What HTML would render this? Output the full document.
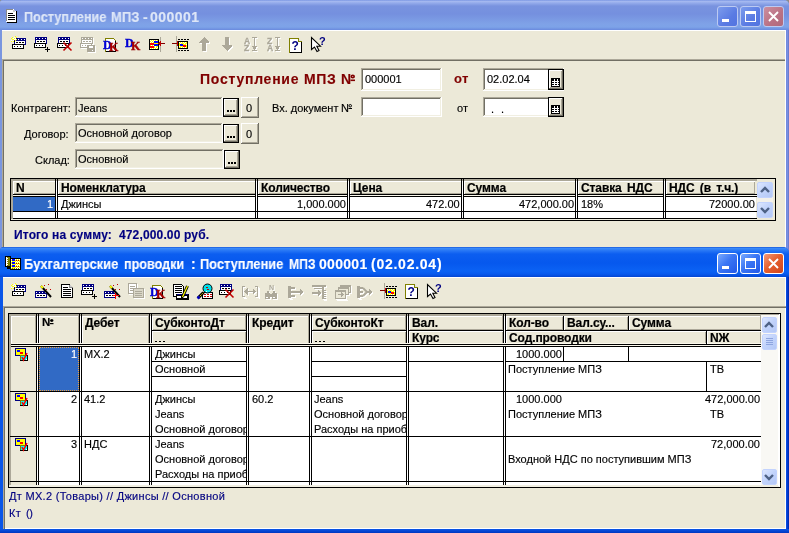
<!DOCTYPE html>
<html><head><meta charset="utf-8">
<style>
*{margin:0;padding:0;box-sizing:border-box}
html,body{width:789px;height:533px;overflow:hidden;background:#8C8C8C}
body{position:relative;font-family:"Liberation Sans",sans-serif;font-size:11px;color:#000}
.a{position:absolute}
.t{position:absolute;white-space:pre;will-change:transform;-webkit-text-stroke:0.15px currentColor}
svg{position:absolute;overflow:visible}
</style></head><body>
<div class="a" style="left:0;top:0;width:789px;height:260px;background:#7A96DF;border-radius:3px 5px 0 0;overflow:hidden">
<div class="a" style="left:0;top:0;width:789px;height:30px;background:linear-gradient(#6A89DE 0px,#A9BCF1 1px,#94ABEB 3px,#7993DF 6px,#7590DF 14px,#7FA2E7 24px,#7DA3E8 27px,#6A8ADE 30px)"></div>
</div>
<div class="t" style="left:24px;top:10.15px;font-size:14px;line-height:14px;font-weight:bold;color:#DDE6F7;transform:scaleX(0.905);transform-origin:0 0;">Поступление</div>
<div class="t" style="left:111px;top:10.15px;font-size:14px;line-height:14px;font-weight:bold;color:#DDE6F7;transform:scaleX(0.93);transform-origin:0 0;">МПЗ</div>
<div class="t" style="left:142.5px;top:10.15px;font-size:14px;line-height:14px;font-weight:bold;color:#DDE6F7;transform:scaleX(1);transform-origin:0 0;">-</div>
<div class="t" style="left:149.5px;top:10.15px;font-size:14px;line-height:14px;font-weight:bold;color:#DDE6F7;transform:scaleX(1.0);transform-origin:0 0;letter-spacing:0.45px">000001</div>
<svg style="left:6px;top:9px" width="12" height="14" viewBox="0 0 12 14" shape-rendering="crispEdges"><rect x="1" y="2" width="10" height="12" fill="#000"/><path d="M0 0H7L10 3V13H0Z" fill="#fff"/><rect x="0" y="0" width="7" height="1" fill="#8A8A8A"/><rect x="0" y="0" width="1" height="12" fill="#8A8A8A"/><rect x="7" y="1" width="2" height="2" fill="#C8C8C8"/><rect x="2" y="4" width="5" height="1" fill="#000"/><rect x="2" y="6" width="7" height="1" fill="#000"/><rect x="2" y="8" width="7" height="1" fill="#000"/><rect x="2" y="10" width="7" height="1" fill="#000"/></svg>
<div class="a" style="left:717px;top:6px;width:21px;height:21px;border:1px solid #BCCAF2;border-radius:3px;background:linear-gradient(135deg,#7C9CEC 0%,#5A7BE3 60%,#5274E0 100%)">
<div class="a" style="left:4px;top:12px;width:7px;height:3px;background:#fff"></div>
</div>
<div class="a" style="left:740px;top:6px;width:21px;height:21px;border:1px solid #BCCAF2;border-radius:3px;background:linear-gradient(135deg,#7C9CEC 0%,#5A7BE3 60%,#5274E0 100%)">
<div class="a" style="left:4px;top:4px;width:11px;height:11px;border:1px solid #fff;border-top-width:3px"></div>
</div>
<div class="a" style="left:763px;top:6px;width:21px;height:21px;border:1px solid #BCCAF2;border-radius:3px;background:linear-gradient(135deg,#CC8F9F 0%,#BA7184 60%,#B06A7C 100%)">
<svg style="left:4px;top:4px" width="11" height="11" viewBox="0 0 11 11"><path d="M1 1L10 10M10 1L1 10" stroke="#fff" stroke-width="1.9"/></svg>
</div>
<div class="a" style="left:2px;top:30px;width:784px;height:230px;background:#ECE9D8;"></div>
<div class="a" style="left:2px;top:30px;width:784px;height:1px;background:#FFFFFF;"></div>
<svg style="left:0;top:0" width="789" height="247" viewBox="0 0 789 247" shape-rendering="crispEdges"><g transform="translate(11,36)"><rect x="3" y="2" width="12" height="7" fill="#000080"/><rect x="4" y="3" width="1" height="1" fill="#fff"/><rect x="7" y="3" width="1" height="1" fill="#fff"/><rect x="10" y="3" width="1" height="1" fill="#fff"/><rect x="13" y="3" width="1" height="1" fill="#fff"/><rect x="4" y="5" width="10" height="3" fill="#fff"/><rect x="5" y="6" width="2" height="1" fill="#000"/><rect x="8" y="6" width="2" height="1" fill="#000"/><rect x="11" y="6" width="2" height="1" fill="#000"/><rect x="1" y="8" width="12" height="5" fill="#000"/><rect x="2" y="9" width="10" height="3" fill="#fff"/><rect x="3" y="10" width="1" height="1" fill="#000"/><rect x="6" y="10" width="1" height="1" fill="#000"/><rect x="9" y="10" width="1" height="1" fill="#000"/><rect x="0" y="2" width="1" height="1" fill="#ff0"/><rect x="1" y="1" width="1" height="1" fill="#ff0"/><rect x="3" y="1" width="1" height="1" fill="#fff"/><rect x="4" y="0" width="1" height="1" fill="#ff0"/><rect x="5" y="1" width="1" height="1" fill="#ff0"/><rect x="2" y="2" width="1" height="1" fill="#fff"/><rect x="3" y="2" width="1" height="1" fill="#ff0"/><rect x="4" y="2" width="1" height="1" fill="#fff"/><rect x="1" y="3" width="1" height="1" fill="#ff0"/><rect x="2" y="3" width="1" height="1" fill="#ff0"/><rect x="3" y="3" width="1" height="1" fill="#fff"/><rect x="0" y="4" width="1" height="1" fill="#fff"/><rect x="2" y="4" width="1" height="1" fill="#fff"/><rect x="4" y="4" width="1" height="1" fill="#ff0"/><rect x="0" y="5" width="1" height="1" fill="#ff0"/><rect x="2" y="5" width="1" height="1" fill="#ff0"/><rect x="3" y="5" width="1" height="1" fill="#000"/><rect x="5" y="3" width="1" height="1" fill="#ff0"/></g><g transform="translate(34,36)"><rect x="1" y="1" width="12" height="7" fill="#000080"/><rect x="2" y="2" width="1" height="1" fill="#fff"/><rect x="5" y="2" width="1" height="1" fill="#fff"/><rect x="8" y="2" width="1" height="1" fill="#fff"/><rect x="11" y="2" width="1" height="1" fill="#fff"/><rect x="2" y="4" width="10" height="3" fill="#fff"/><rect x="3" y="5" width="2" height="1" fill="#000"/><rect x="6" y="5" width="2" height="1" fill="#000"/><rect x="9" y="5" width="2" height="1" fill="#000"/><rect x="0" y="7" width="12" height="5" fill="#000"/><rect x="1" y="8" width="10" height="3" fill="#fff"/><rect x="2" y="9" width="1" height="1" fill="#000"/><rect x="5" y="9" width="1" height="1" fill="#000"/><rect x="8" y="9" width="1" height="1" fill="#000"/><rect x="11" y="13" width="5" height="1" fill="#000"/><rect x="13" y="11" width="1" height="5" fill="#000"/></g><g transform="translate(57,36)"><rect x="1" y="1" width="12" height="7" fill="#000080"/><rect x="2" y="2" width="1" height="1" fill="#fff"/><rect x="5" y="2" width="1" height="1" fill="#fff"/><rect x="8" y="2" width="1" height="1" fill="#fff"/><rect x="11" y="2" width="1" height="1" fill="#fff"/><rect x="2" y="4" width="10" height="3" fill="#fff"/><rect x="3" y="5" width="2" height="1" fill="#000"/><rect x="6" y="5" width="2" height="1" fill="#000"/><rect x="9" y="5" width="2" height="1" fill="#000"/><rect x="0" y="7" width="12" height="5" fill="#000"/><rect x="1" y="8" width="10" height="3" fill="#fff"/><rect x="2" y="9" width="1" height="1" fill="#000"/><rect x="5" y="9" width="1" height="1" fill="#000"/><rect x="8" y="9" width="1" height="1" fill="#000"/><path d="M6.5 6.5L14.5 14.5M14.5 6.5L6.5 14.5" stroke="#C00000" stroke-width="1.6" fill="none" shape-rendering="auto"/></g><g transform="translate(80,36)"><g transform="translate(1,1)"><rect x="1" y="1" width="12" height="7" fill="#FFFFFF"/><rect x="2" y="2" width="1" height="1" fill="#fff"/><rect x="5" y="2" width="1" height="1" fill="#fff"/><rect x="8" y="2" width="1" height="1" fill="#fff"/><rect x="11" y="2" width="1" height="1" fill="#fff"/><rect x="2" y="4" width="10" height="3" fill="#fff"/><rect x="3" y="5" width="2" height="1" fill="#FFFFFF"/><rect x="6" y="5" width="2" height="1" fill="#FFFFFF"/><rect x="9" y="5" width="2" height="1" fill="#FFFFFF"/><rect x="0" y="7" width="12" height="5" fill="#FFFFFF"/><rect x="1" y="8" width="10" height="3" fill="#fff"/><rect x="2" y="9" width="1" height="1" fill="#FFFFFF"/><rect x="5" y="9" width="1" height="1" fill="#FFFFFF"/><rect x="8" y="9" width="1" height="1" fill="#FFFFFF"/><rect x="7" y="9" width="8" height="7" fill="#FFFFFF"/><rect x="9" y="10" width="4" height="2" fill="#fff"/><rect x="12" y="14" width="1" height="1" fill="#fff"/></g><rect x="1" y="1" width="12" height="7" fill="#ACA899"/><rect x="2" y="2" width="1" height="1" fill="#fff"/><rect x="5" y="2" width="1" height="1" fill="#fff"/><rect x="8" y="2" width="1" height="1" fill="#fff"/><rect x="11" y="2" width="1" height="1" fill="#fff"/><rect x="2" y="4" width="10" height="3" fill="#fff"/><rect x="3" y="5" width="2" height="1" fill="#ACA899"/><rect x="6" y="5" width="2" height="1" fill="#ACA899"/><rect x="9" y="5" width="2" height="1" fill="#ACA899"/><rect x="0" y="7" width="12" height="5" fill="#ACA899"/><rect x="1" y="8" width="10" height="3" fill="#fff"/><rect x="2" y="9" width="1" height="1" fill="#ACA899"/><rect x="5" y="9" width="1" height="1" fill="#ACA899"/><rect x="8" y="9" width="1" height="1" fill="#ACA899"/><rect x="7" y="9" width="8" height="7" fill="#ACA899"/><rect x="9" y="10" width="4" height="2" fill="#fff"/><rect x="12" y="14" width="1" height="1" fill="#fff"/></g><g transform="translate(104,37)"><path d="M1.5 1.5H9.5L11.5 3.5V14.5H1.5Z" fill="#fff" stroke="#808000"/><rect x="2" y="14" width="10" height="1" fill="#000"/><rect x="11" y="4" width="1" height="11" fill="#000"/><text x="-1" y="12" font-family="Liberation Serif" font-weight="bold" font-size="12" fill="#0000E0" stroke="#0000C0" stroke-width="0.4">D</text><text x="5" y="14" font-family="Liberation Serif" font-weight="bold" font-size="12" fill="#B00000" stroke="#900000" stroke-width="0.4">K</text></g><g transform="translate(126,36)"><text x="-1" y="11" font-family="Liberation Serif" font-weight="bold" font-size="12" fill="#0000E0" stroke="#0000C0" stroke-width="0.4">D</text><text x="5" y="14" font-family="Liberation Serif" font-weight="bold" font-size="12" fill="#B00000" stroke="#900000" stroke-width="0.4">K</text></g><g transform="translate(149,36)"><rect x="0" y="3" width="10" height="11" fill="#000"/><rect x="1" y="4" width="8" height="9" fill="#ff0"/><rect x="1" y="4" width="1" height="1" fill="#fff"/><rect x="3" y="4" width="1" height="1" fill="#fff"/><rect x="5" y="4" width="1" height="1" fill="#fff"/><rect x="7" y="4" width="1" height="1" fill="#fff"/><rect x="2" y="5" width="1" height="1" fill="#fff"/><rect x="4" y="5" width="1" height="1" fill="#fff"/><rect x="1" y="6" width="1" height="1" fill="#fff"/><rect x="3" y="6" width="1" height="1" fill="#fff"/><rect x="2" y="9" width="1" height="1" fill="#fff"/><rect x="4" y="9" width="1" height="1" fill="#fff"/><rect x="6" y="10" width="1" height="1" fill="#fff"/><rect x="1" y="12" width="1" height="1" fill="#fff"/><rect x="3" y="12" width="1" height="1" fill="#fff"/><rect x="5" y="12" width="1" height="1" fill="#fff"/><rect x="7" y="12" width="1" height="1" fill="#fff"/><rect x="6" y="11" width="1" height="1" fill="#fff"/><rect x="8" y="11" width="1" height="1" fill="#fff"/><rect x="5" y="5" width="4" height="2" fill="#00f"/><rect x="5" y="8" width="4" height="2" fill="#00f"/><rect x="1" y="7" width="4" height="2" fill="#f00"/><rect x="1" y="10" width="4" height="2" fill="#f00"/><rect x="11" y="1" width="1" height="15" fill="#ACA899"/><rect x="10" y="7" width="6" height="1" fill="#800000"/><path d="M9 7.5L12 4.5V10.5Z" fill="#C00000"/></g><g transform="translate(172,36)"><rect x="4" y="0" width="1" height="16" fill="#ACA899"/><rect x="0" y="7" width="6" height="1" fill="#800000"/><path d="M8 7.5L5 4.5V10.5Z" fill="#C00000"/><rect x="6" y="5" width="10" height="8" fill="#000"/><rect x="7" y="6" width="8" height="6" fill="#ff0"/><rect x="7" y="6" width="1" height="1" fill="#fff"/><rect x="9" y="6" width="1" height="1" fill="#fff"/><rect x="11" y="6" width="1" height="1" fill="#fff"/><rect x="13" y="6" width="1" height="1" fill="#fff"/><rect x="8" y="7" width="1" height="1" fill="#fff"/><rect x="12" y="7" width="1" height="1" fill="#fff"/><rect x="14" y="8" width="1" height="1" fill="#fff"/><rect x="7" y="10" width="1" height="1" fill="#fff"/><rect x="9" y="11" width="1" height="1" fill="#fff"/><rect x="11" y="11" width="1" height="1" fill="#fff"/><rect x="13" y="11" width="1" height="1" fill="#fff"/><rect x="8" y="8" width="3" height="2" fill="#00f"/><rect x="11" y="9" width="3" height="2" fill="#f00"/><rect x="6" y="3" width="2" height="1" fill="#000"/><rect x="6" y="14" width="2" height="1" fill="#000"/><rect x="9" y="3" width="2" height="1" fill="#000"/><rect x="9" y="14" width="2" height="1" fill="#000"/><rect x="12" y="3" width="2" height="1" fill="#000"/><rect x="12" y="14" width="2" height="1" fill="#000"/><rect x="15" y="3" width="2" height="1" fill="#000"/><rect x="15" y="14" width="2" height="1" fill="#000"/></g><g transform="translate(199,37)"><g transform="translate(1,1)"><path d="M5 0L10 5V6H7V14H3V6H0V5Z" fill="#FFFFFF"/></g><path d="M5 0L10 5V6H7V14H3V6H0V5Z" fill="#ACA899"/></g><g transform="translate(222,37)"><g transform="translate(1,1)"><path d="M3 0H7V8H10V9L5 14L0 9V8H3Z" fill="#FFFFFF"/></g><path d="M3 0H7V8H10V9L5 14L0 9V8H3Z" fill="#ACA899"/></g><g transform="translate(244,37)"><g transform="translate(1,1)"><text x="0" y="6.5" font-family="Liberation Sans" font-weight="bold" font-size="8.5" fill="#FFFFFF" stroke="#FFFFFF" stroke-width="0.3">A</text><text x="0" y="13.5" font-family="Liberation Sans" font-weight="bold" font-size="8.5" fill="#FFFFFF" stroke="#FFFFFF" stroke-width="0.3">Z</text><rect x="8" y="0" width="5" height="1" fill="#FFFFFF"/><rect x="10" y="0" width="1" height="11" fill="#FFFFFF"/><path d="M7.5 9H13.5L10.5 13Z" fill="#FFFFFF"/><rect x="8" y="13" width="5" height="1" fill="#FFFFFF"/></g><text x="0" y="6.5" font-family="Liberation Sans" font-weight="bold" font-size="8.5" fill="#ACA899" stroke="#ACA899" stroke-width="0.3">A</text><text x="0" y="13.5" font-family="Liberation Sans" font-weight="bold" font-size="8.5" fill="#ACA899" stroke="#ACA899" stroke-width="0.3">Z</text><rect x="8" y="0" width="5" height="1" fill="#ACA899"/><rect x="10" y="0" width="1" height="11" fill="#ACA899"/><path d="M7.5 9H13.5L10.5 13Z" fill="#ACA899"/><rect x="8" y="13" width="5" height="1" fill="#ACA899"/></g><g transform="translate(267,37)"><g transform="translate(1,1)"><text x="0" y="6.5" font-family="Liberation Sans" font-weight="bold" font-size="8.5" fill="#FFFFFF" stroke="#FFFFFF" stroke-width="0.3">Z</text><text x="0" y="13.5" font-family="Liberation Sans" font-weight="bold" font-size="8.5" fill="#FFFFFF" stroke="#FFFFFF" stroke-width="0.3">A</text><rect x="8" y="0" width="5" height="1" fill="#FFFFFF"/><rect x="10" y="0" width="1" height="11" fill="#FFFFFF"/><path d="M7.5 9H13.5L10.5 13Z" fill="#FFFFFF"/><rect x="8" y="13" width="5" height="1" fill="#FFFFFF"/></g><text x="0" y="6.5" font-family="Liberation Sans" font-weight="bold" font-size="8.5" fill="#ACA899" stroke="#ACA899" stroke-width="0.3">Z</text><text x="0" y="13.5" font-family="Liberation Sans" font-weight="bold" font-size="8.5" fill="#ACA899" stroke="#ACA899" stroke-width="0.3">A</text><rect x="8" y="0" width="5" height="1" fill="#ACA899"/><rect x="10" y="0" width="1" height="11" fill="#ACA899"/><path d="M7.5 9H13.5L10.5 13Z" fill="#ACA899"/><rect x="8" y="13" width="5" height="1" fill="#ACA899"/></g><g transform="translate(289,38)"><path d="M0.5 14.5V0.5H9.5L12.5 3.5V14.5Z" fill="#fff" stroke="#808000"/><rect x="1" y="14" width="12" height="1" fill="#000"/><rect x="12" y="4" width="1" height="11" fill="#000"/><path d="M9.5 0.5V3.5H12.5" fill="#DDD" stroke="#808000"/><text x="2.5" y="11.5" font-family="Liberation Sans" font-weight="bold" font-size="12" fill="#000080">?</text></g><g transform="translate(311,37)"><path d="M0.5 0.5V12.5L3.5 10L6 14.5L8 13.5L5.8 9.2H9.5Z" fill="#fff" stroke="#000" stroke-width="1.1" shape-rendering="auto"/><text x="8" y="8" font-family="Liberation Sans" font-weight="bold" font-size="11" fill="#000080">?</text></g></svg>
<div class="a" style="left:2px;top:59px;width:784px;height:1px;background:#ACA899;"></div>
<div class="a" style="left:2px;top:59px;width:1px;height:201px;background:#ACA899;"></div>
<div class="a" style="left:3px;top:60px;width:783px;height:1px;background:#716F64;"></div>
<div class="a" style="left:3px;top:60px;width:1px;height:200px;background:#716F64;"></div>
<div class="t" style="left:200px;top:72.15px;font-size:14px;line-height:14px;font-weight:bold;color:#800000;letter-spacing:0.75px">Поступление МПЗ</div>
<div class="t" style="left:341px;top:72.15px;font-size:14px;line-height:14px;font-weight:bold;color:#800000;">N</div>
<svg style="left:0;top:0" width="789" height="533" viewBox="0 0 789 533"><ellipse cx="352.75" cy="76.5" rx="1.45" ry="1.2" fill="none" stroke="#800000" stroke-width="1.6"/><rect x="350.5" y="79.5" width="4.5" height="1.6" fill="#800000"/></svg>
<div class="a" style="left:361px;top:68px;width:81px;height:23px;background:#FFFFFF;"></div>
<div class="a" style="left:361px;top:68px;width:81px;height:1px;background:#ACA899;"></div>
<div class="a" style="left:361px;top:68px;width:1px;height:23px;background:#ACA899;"></div>
<div class="a" style="left:362px;top:69px;width:79px;height:1px;background:#716F64;"></div>
<div class="a" style="left:362px;top:69px;width:1px;height:21px;background:#716F64;"></div>
<div class="a" style="left:361px;top:90px;width:81px;height:1px;background:#FFFFFF;"></div>
<div class="a" style="left:441px;top:68px;width:1px;height:23px;background:#FFFFFF;"></div>
<div class="a" style="left:362px;top:89px;width:79px;height:1px;background:#F1EFE2;"></div>
<div class="a" style="left:440px;top:69px;width:1px;height:21px;background:#F1EFE2;"></div>
<div class="t" style="left:365px;top:73.69px;font-size:11px;line-height:11px;color:#000;">000001</div>
<div class="t" style="left:454px;top:71.50px;font-size:13px;line-height:13px;font-weight:bold;color:#800000;letter-spacing:0.5px">от</div>
<div class="a" style="left:483px;top:68px;width:81px;height:23px;background:#FFFFFF;"></div>
<div class="a" style="left:483px;top:68px;width:81px;height:1px;background:#ACA899;"></div>
<div class="a" style="left:483px;top:68px;width:1px;height:23px;background:#ACA899;"></div>
<div class="a" style="left:484px;top:69px;width:79px;height:1px;background:#716F64;"></div>
<div class="a" style="left:484px;top:69px;width:1px;height:21px;background:#716F64;"></div>
<div class="a" style="left:483px;top:90px;width:81px;height:1px;background:#FFFFFF;"></div>
<div class="a" style="left:563px;top:68px;width:1px;height:23px;background:#FFFFFF;"></div>
<div class="a" style="left:484px;top:89px;width:79px;height:1px;background:#F1EFE2;"></div>
<div class="a" style="left:562px;top:69px;width:1px;height:21px;background:#F1EFE2;"></div>
<div class="a" style="left:548px;top:69px;width:16px;height:21px;background:#ECE9D8;"></div>
<div class="a" style="left:548px;top:69px;width:16px;height:21px;background:#000;"></div>
<div class="a" style="left:549px;top:70px;width:14px;height:19px;background:#ECE9D8;"></div>
<div class="a" style="left:549px;top:70px;width:13px;height:1px;background:#FFFFFF;"></div>
<div class="a" style="left:549px;top:70px;width:1px;height:18px;background:#FFFFFF;"></div>
<div class="a" style="left:549px;top:88px;width:14px;height:1px;background:#716F64;"></div>
<div class="a" style="left:562px;top:70px;width:1px;height:19px;background:#716F64;"></div>
<div class="a" style="left:550px;top:87px;width:12px;height:1px;background:#ACA899;"></div>
<div class="a" style="left:561px;top:71px;width:1px;height:17px;background:#ACA899;"></div>
<svg style="left:551px;top:78px" width="9" height="9" viewBox="0 0 9 9" shape-rendering="crispEdges"><rect x="0" y="0" width="9" height="9" fill="#000"/><rect x="1" y="3" width="7" height="1" fill="#fff"/><rect x="1" y="5" width="7" height="1" fill="#fff"/><rect x="1" y="7" width="7" height="1" fill="#fff"/><rect x="3" y="1" width="1" height="7" fill="#fff"/><rect x="6" y="1" width="1" height="7" fill="#fff"/></svg>
<div class="t" style="left:487px;top:73.69px;font-size:11px;line-height:11px;color:#000;">02.02.04</div>
<div class="t" style="left:11px;top:102.69px;font-size:11px;line-height:11px;color:#000;">Контрагент:</div>
<div class="a" style="left:75px;top:97px;width:148px;height:20px;background:#ECE9D8;"></div>
<div class="a" style="left:75px;top:97px;width:148px;height:1px;background:#ACA899;"></div>
<div class="a" style="left:75px;top:97px;width:1px;height:20px;background:#ACA899;"></div>
<div class="a" style="left:76px;top:98px;width:146px;height:1px;background:#716F64;"></div>
<div class="a" style="left:76px;top:98px;width:1px;height:18px;background:#716F64;"></div>
<div class="a" style="left:75px;top:116px;width:148px;height:1px;background:#FFFFFF;"></div>
<div class="a" style="left:222px;top:97px;width:1px;height:20px;background:#FFFFFF;"></div>
<div class="a" style="left:76px;top:115px;width:146px;height:1px;background:#F1EFE2;"></div>
<div class="a" style="left:221px;top:98px;width:1px;height:18px;background:#F1EFE2;"></div>
<div class="t" style="left:78px;top:102.69px;font-size:11px;line-height:11px;color:#000;">Jeans</div>
<div class="a" style="left:223px;top:98px;width:16px;height:19px;background:#ECE9D8;"></div>
<div class="a" style="left:223px;top:98px;width:16px;height:19px;background:#000;"></div>
<div class="a" style="left:224px;top:99px;width:14px;height:17px;background:#ECE9D8;"></div>
<div class="a" style="left:224px;top:99px;width:13px;height:1px;background:#FFFFFF;"></div>
<div class="a" style="left:224px;top:99px;width:1px;height:16px;background:#FFFFFF;"></div>
<div class="a" style="left:224px;top:115px;width:14px;height:1px;background:#716F64;"></div>
<div class="a" style="left:237px;top:99px;width:1px;height:17px;background:#716F64;"></div>
<div class="a" style="left:225px;top:114px;width:12px;height:1px;background:#ACA899;"></div>
<div class="a" style="left:236px;top:100px;width:1px;height:15px;background:#ACA899;"></div>
<div class="a" style="left:227px;top:110px;width:2px;height:2px;background:#000;"></div>
<div class="a" style="left:230px;top:110px;width:2px;height:2px;background:#000;"></div>
<div class="a" style="left:233px;top:110px;width:2px;height:2px;background:#000;"></div>
<div class="a" style="left:241px;top:97px;width:18px;height:21px;background:#ECE9D8;"></div>
<div class="a" style="left:241px;top:97px;width:17px;height:1px;background:#FFFFFF;"></div>
<div class="a" style="left:241px;top:97px;width:1px;height:20px;background:#FFFFFF;"></div>
<div class="a" style="left:241px;top:117px;width:18px;height:1px;background:#716F64;"></div>
<div class="a" style="left:258px;top:97px;width:1px;height:21px;background:#716F64;"></div>
<div class="a" style="left:242px;top:116px;width:16px;height:1px;background:#ACA899;"></div>
<div class="a" style="left:257px;top:98px;width:1px;height:19px;background:#ACA899;"></div>
<div class="t" style="left:246px;top:102.69px;font-size:11px;line-height:11px;color:#000;">0</div>
<div class="t" style="left:272px;top:102.69px;font-size:11px;line-height:11px;color:#000;">Вх. документ</div>
<div class="t" style="left:341px;top:102.69px;font-size:11px;line-height:11px;color:#000;">N</div>
<svg style="left:0;top:0" width="789" height="533" viewBox="0 0 789 533"><ellipse cx="350.25" cy="105.75" rx="1.25" ry="1.25" fill="none" stroke="#000" stroke-width="1"/><rect x="348.5" y="108" width="3.5" height="1" fill="#000"/></svg>
<div class="a" style="left:361px;top:97px;width:81px;height:20px;background:#FFFFFF;"></div>
<div class="a" style="left:361px;top:97px;width:81px;height:1px;background:#ACA899;"></div>
<div class="a" style="left:361px;top:97px;width:1px;height:20px;background:#ACA899;"></div>
<div class="a" style="left:362px;top:98px;width:79px;height:1px;background:#716F64;"></div>
<div class="a" style="left:362px;top:98px;width:1px;height:18px;background:#716F64;"></div>
<div class="a" style="left:361px;top:116px;width:81px;height:1px;background:#FFFFFF;"></div>
<div class="a" style="left:441px;top:97px;width:1px;height:20px;background:#FFFFFF;"></div>
<div class="a" style="left:362px;top:115px;width:79px;height:1px;background:#F1EFE2;"></div>
<div class="a" style="left:440px;top:98px;width:1px;height:18px;background:#F1EFE2;"></div>
<div class="t" style="left:457px;top:102.69px;font-size:11px;line-height:11px;color:#000;">от</div>
<div class="a" style="left:483px;top:97px;width:81px;height:20px;background:#FFFFFF;"></div>
<div class="a" style="left:483px;top:97px;width:81px;height:1px;background:#ACA899;"></div>
<div class="a" style="left:483px;top:97px;width:1px;height:20px;background:#ACA899;"></div>
<div class="a" style="left:484px;top:98px;width:79px;height:1px;background:#716F64;"></div>
<div class="a" style="left:484px;top:98px;width:1px;height:18px;background:#716F64;"></div>
<div class="a" style="left:483px;top:116px;width:81px;height:1px;background:#FFFFFF;"></div>
<div class="a" style="left:563px;top:97px;width:1px;height:20px;background:#FFFFFF;"></div>
<div class="a" style="left:484px;top:115px;width:79px;height:1px;background:#F1EFE2;"></div>
<div class="a" style="left:562px;top:98px;width:1px;height:18px;background:#F1EFE2;"></div>
<div class="a" style="left:548px;top:97px;width:16px;height:20px;background:#ECE9D8;"></div>
<div class="a" style="left:548px;top:97px;width:16px;height:20px;background:#000;"></div>
<div class="a" style="left:549px;top:98px;width:14px;height:18px;background:#ECE9D8;"></div>
<div class="a" style="left:549px;top:98px;width:13px;height:1px;background:#FFFFFF;"></div>
<div class="a" style="left:549px;top:98px;width:1px;height:17px;background:#FFFFFF;"></div>
<div class="a" style="left:549px;top:115px;width:14px;height:1px;background:#716F64;"></div>
<div class="a" style="left:562px;top:98px;width:1px;height:18px;background:#716F64;"></div>
<div class="a" style="left:550px;top:114px;width:12px;height:1px;background:#ACA899;"></div>
<div class="a" style="left:561px;top:99px;width:1px;height:16px;background:#ACA899;"></div>
<svg style="left:551px;top:105px" width="9" height="9" viewBox="0 0 9 9" shape-rendering="crispEdges"><rect x="0" y="0" width="9" height="9" fill="#000"/><rect x="1" y="3" width="7" height="1" fill="#fff"/><rect x="1" y="5" width="7" height="1" fill="#fff"/><rect x="1" y="7" width="7" height="1" fill="#fff"/><rect x="3" y="1" width="1" height="7" fill="#fff"/><rect x="6" y="1" width="1" height="7" fill="#fff"/></svg>
<div class="t" style="left:491px;top:103.69px;font-size:11px;line-height:11px;color:#000;">.</div>
<div class="t" style="left:501px;top:103.69px;font-size:11px;line-height:11px;color:#000;">.</div>
<div class="t" style="left:24px;top:128.69px;font-size:11px;line-height:11px;color:#000;">Договор:</div>
<div class="a" style="left:75px;top:123px;width:148px;height:20px;background:#ECE9D8;"></div>
<div class="a" style="left:75px;top:123px;width:148px;height:1px;background:#ACA899;"></div>
<div class="a" style="left:75px;top:123px;width:1px;height:20px;background:#ACA899;"></div>
<div class="a" style="left:76px;top:124px;width:146px;height:1px;background:#716F64;"></div>
<div class="a" style="left:76px;top:124px;width:1px;height:18px;background:#716F64;"></div>
<div class="a" style="left:75px;top:142px;width:148px;height:1px;background:#FFFFFF;"></div>
<div class="a" style="left:222px;top:123px;width:1px;height:20px;background:#FFFFFF;"></div>
<div class="a" style="left:76px;top:141px;width:146px;height:1px;background:#F1EFE2;"></div>
<div class="a" style="left:221px;top:124px;width:1px;height:18px;background:#F1EFE2;"></div>
<div class="t" style="left:78px;top:128.19px;font-size:11px;line-height:11px;color:#000;">Основной договор</div>
<div class="a" style="left:223px;top:124px;width:16px;height:19px;background:#ECE9D8;"></div>
<div class="a" style="left:223px;top:124px;width:16px;height:19px;background:#000;"></div>
<div class="a" style="left:224px;top:125px;width:14px;height:17px;background:#ECE9D8;"></div>
<div class="a" style="left:224px;top:125px;width:13px;height:1px;background:#FFFFFF;"></div>
<div class="a" style="left:224px;top:125px;width:1px;height:16px;background:#FFFFFF;"></div>
<div class="a" style="left:224px;top:141px;width:14px;height:1px;background:#716F64;"></div>
<div class="a" style="left:237px;top:125px;width:1px;height:17px;background:#716F64;"></div>
<div class="a" style="left:225px;top:140px;width:12px;height:1px;background:#ACA899;"></div>
<div class="a" style="left:236px;top:126px;width:1px;height:15px;background:#ACA899;"></div>
<div class="a" style="left:227px;top:136px;width:2px;height:2px;background:#000;"></div>
<div class="a" style="left:230px;top:136px;width:2px;height:2px;background:#000;"></div>
<div class="a" style="left:233px;top:136px;width:2px;height:2px;background:#000;"></div>
<div class="a" style="left:241px;top:123px;width:18px;height:21px;background:#ECE9D8;"></div>
<div class="a" style="left:241px;top:123px;width:17px;height:1px;background:#FFFFFF;"></div>
<div class="a" style="left:241px;top:123px;width:1px;height:20px;background:#FFFFFF;"></div>
<div class="a" style="left:241px;top:143px;width:18px;height:1px;background:#716F64;"></div>
<div class="a" style="left:258px;top:123px;width:1px;height:21px;background:#716F64;"></div>
<div class="a" style="left:242px;top:142px;width:16px;height:1px;background:#ACA899;"></div>
<div class="a" style="left:257px;top:124px;width:1px;height:19px;background:#ACA899;"></div>
<div class="t" style="left:246px;top:128.69px;font-size:11px;line-height:11px;color:#000;">0</div>
<div class="t" style="left:35px;top:155.19px;font-size:11px;line-height:11px;color:#000;">Склад:</div>
<div class="a" style="left:75px;top:149px;width:149px;height:20px;background:#ECE9D8;"></div>
<div class="a" style="left:75px;top:149px;width:149px;height:1px;background:#ACA899;"></div>
<div class="a" style="left:75px;top:149px;width:1px;height:20px;background:#ACA899;"></div>
<div class="a" style="left:76px;top:150px;width:147px;height:1px;background:#716F64;"></div>
<div class="a" style="left:76px;top:150px;width:1px;height:18px;background:#716F64;"></div>
<div class="a" style="left:75px;top:168px;width:149px;height:1px;background:#FFFFFF;"></div>
<div class="a" style="left:223px;top:149px;width:1px;height:20px;background:#FFFFFF;"></div>
<div class="a" style="left:76px;top:167px;width:147px;height:1px;background:#F1EFE2;"></div>
<div class="a" style="left:222px;top:150px;width:1px;height:18px;background:#F1EFE2;"></div>
<div class="t" style="left:78px;top:154.19px;font-size:11px;line-height:11px;color:#000;">Основной</div>
<div class="a" style="left:224px;top:150px;width:16px;height:19px;background:#ECE9D8;"></div>
<div class="a" style="left:224px;top:150px;width:16px;height:19px;background:#000;"></div>
<div class="a" style="left:225px;top:151px;width:14px;height:17px;background:#ECE9D8;"></div>
<div class="a" style="left:225px;top:151px;width:13px;height:1px;background:#FFFFFF;"></div>
<div class="a" style="left:225px;top:151px;width:1px;height:16px;background:#FFFFFF;"></div>
<div class="a" style="left:225px;top:167px;width:14px;height:1px;background:#716F64;"></div>
<div class="a" style="left:238px;top:151px;width:1px;height:17px;background:#716F64;"></div>
<div class="a" style="left:226px;top:166px;width:12px;height:1px;background:#ACA899;"></div>
<div class="a" style="left:237px;top:152px;width:1px;height:15px;background:#ACA899;"></div>
<div class="a" style="left:228px;top:162px;width:2px;height:2px;background:#000;"></div>
<div class="a" style="left:231px;top:162px;width:2px;height:2px;background:#000;"></div>
<div class="a" style="left:234px;top:162px;width:2px;height:2px;background:#000;"></div>
<div class="a" style="left:10px;top:178px;width:766px;height:43px;background:#000;"></div>
<div class="a" style="left:11px;top:179px;width:764px;height:41px;background:#ACA899;"></div>
<div class="a" style="left:13px;top:181px;width:762px;height:38px;background:#ECE9D8;"></div>
<div class="a" style="left:13px;top:196px;width:743px;height:23px;background:#FFFFFF;"></div>
<div class="a" style="left:13px;top:181px;width:43px;height:1px;background:#FFFFFF;"></div>
<div class="a" style="left:13px;top:181px;width:1px;height:13px;background:#FFFFFF;"></div>
<div class="a" style="left:55px;top:182px;width:1px;height:12px;background:#ACA899;"></div>
<div class="a" style="left:14px;top:193px;width:42px;height:1px;background:#ACA899;"></div>
<div class="t" style="left:16px;top:181.84px;font-size:12px;line-height:12px;font-weight:bold;color:#000;letter-spacing:-0.1px;word-spacing:2px;-webkit-text-stroke:0.2px #000">N</div>
<div class="a" style="left:58px;top:181px;width:198px;height:1px;background:#FFFFFF;"></div>
<div class="a" style="left:58px;top:181px;width:1px;height:13px;background:#FFFFFF;"></div>
<div class="a" style="left:255px;top:182px;width:1px;height:12px;background:#ACA899;"></div>
<div class="a" style="left:59px;top:193px;width:197px;height:1px;background:#ACA899;"></div>
<div class="t" style="left:61px;top:181.84px;font-size:12px;line-height:12px;font-weight:bold;color:#000;letter-spacing:-0.1px;word-spacing:2px;-webkit-text-stroke:0.2px #000">Номенклатура</div>
<div class="a" style="left:258px;top:181px;width:90px;height:1px;background:#FFFFFF;"></div>
<div class="a" style="left:258px;top:181px;width:1px;height:13px;background:#FFFFFF;"></div>
<div class="a" style="left:347px;top:182px;width:1px;height:12px;background:#ACA899;"></div>
<div class="a" style="left:259px;top:193px;width:89px;height:1px;background:#ACA899;"></div>
<div class="t" style="left:261px;top:181.84px;font-size:12px;line-height:12px;font-weight:bold;color:#000;letter-spacing:-0.1px;word-spacing:2px;-webkit-text-stroke:0.2px #000">Количество</div>
<div class="a" style="left:350px;top:181px;width:112px;height:1px;background:#FFFFFF;"></div>
<div class="a" style="left:350px;top:181px;width:1px;height:13px;background:#FFFFFF;"></div>
<div class="a" style="left:461px;top:182px;width:1px;height:12px;background:#ACA899;"></div>
<div class="a" style="left:351px;top:193px;width:111px;height:1px;background:#ACA899;"></div>
<div class="t" style="left:353px;top:181.84px;font-size:12px;line-height:12px;font-weight:bold;color:#000;letter-spacing:-0.1px;word-spacing:2px;-webkit-text-stroke:0.2px #000">Цена</div>
<div class="a" style="left:464px;top:181px;width:112px;height:1px;background:#FFFFFF;"></div>
<div class="a" style="left:464px;top:181px;width:1px;height:13px;background:#FFFFFF;"></div>
<div class="a" style="left:575px;top:182px;width:1px;height:12px;background:#ACA899;"></div>
<div class="a" style="left:465px;top:193px;width:111px;height:1px;background:#ACA899;"></div>
<div class="t" style="left:467px;top:181.84px;font-size:12px;line-height:12px;font-weight:bold;color:#000;letter-spacing:-0.1px;word-spacing:2px;-webkit-text-stroke:0.2px #000">Сумма</div>
<div class="a" style="left:578px;top:181px;width:86px;height:1px;background:#FFFFFF;"></div>
<div class="a" style="left:578px;top:181px;width:1px;height:13px;background:#FFFFFF;"></div>
<div class="a" style="left:663px;top:182px;width:1px;height:12px;background:#ACA899;"></div>
<div class="a" style="left:579px;top:193px;width:85px;height:1px;background:#ACA899;"></div>
<div class="t" style="left:581px;top:181.84px;font-size:12px;line-height:12px;font-weight:bold;color:#000;letter-spacing:-0.1px;word-spacing:2px;-webkit-text-stroke:0.2px #000">Ставка НДС</div>
<div class="a" style="left:666px;top:181px;width:89px;height:1px;background:#FFFFFF;"></div>
<div class="a" style="left:666px;top:181px;width:1px;height:13px;background:#FFFFFF;"></div>
<div class="a" style="left:754px;top:182px;width:1px;height:12px;background:#ACA899;"></div>
<div class="a" style="left:667px;top:193px;width:88px;height:1px;background:#ACA899;"></div>
<div class="t" style="left:669px;top:181.84px;font-size:12px;line-height:12px;font-weight:bold;color:#000;letter-spacing:-0.1px;word-spacing:2px;-webkit-text-stroke:0.2px #000">НДС (в т.ч.)</div>
<div class="a" style="left:13px;top:194px;width:744px;height:1px;background:#000;"></div>
<div class="a" style="left:13px;top:195px;width:744px;height:1px;background:#FBF8EC;"></div>
<div class="a" style="left:13px;top:196px;width:744px;height:1px;background:#000;"></div>
<div class="a" style="left:55px;top:179px;width:1px;height:40px;background:#000;"></div>
<div class="a" style="left:56px;top:181px;width:1px;height:38px;background:#FFFFFF;"></div>
<div class="a" style="left:57px;top:179px;width:1px;height:40px;background:#000;"></div>
<div class="a" style="left:255px;top:179px;width:1px;height:40px;background:#000;"></div>
<div class="a" style="left:256px;top:181px;width:1px;height:38px;background:#FFFFFF;"></div>
<div class="a" style="left:257px;top:179px;width:1px;height:40px;background:#000;"></div>
<div class="a" style="left:347px;top:179px;width:1px;height:40px;background:#000;"></div>
<div class="a" style="left:348px;top:181px;width:1px;height:38px;background:#FFFFFF;"></div>
<div class="a" style="left:349px;top:179px;width:1px;height:40px;background:#000;"></div>
<div class="a" style="left:461px;top:179px;width:1px;height:40px;background:#000;"></div>
<div class="a" style="left:462px;top:181px;width:1px;height:38px;background:#FFFFFF;"></div>
<div class="a" style="left:463px;top:179px;width:1px;height:40px;background:#000;"></div>
<div class="a" style="left:575px;top:179px;width:1px;height:40px;background:#000;"></div>
<div class="a" style="left:576px;top:181px;width:1px;height:38px;background:#FFFFFF;"></div>
<div class="a" style="left:577px;top:179px;width:1px;height:40px;background:#000;"></div>
<div class="a" style="left:663px;top:179px;width:1px;height:40px;background:#000;"></div>
<div class="a" style="left:664px;top:181px;width:1px;height:38px;background:#FFFFFF;"></div>
<div class="a" style="left:665px;top:179px;width:1px;height:40px;background:#000;"></div>
<div class="a" style="left:13px;top:211px;width:744px;height:1px;background:#000;"></div>
<div class="a" style="left:13px;top:218px;width:744px;height:1px;background:#000;"></div>
<div class="a" style="left:11px;top:219px;width:764px;height:1px;background:#F1EFE2;"></div>
<div class="a" style="left:13px;top:197px;width:42px;height:14px;background:#316AC5;"></div>
<div class="t" style="right:736px;top:198.69px;font-size:11px;line-height:11px;color:#FFFFFF;text-align:right;">1</div>
<div class="t" style="left:61px;top:198.69px;font-size:11px;line-height:11px;color:#000;">Джинсы</div>
<div class="t" style="right:443px;top:198.69px;font-size:11px;line-height:11px;color:#000;text-align:right;">1,000.000</div>
<div class="t" style="right:329px;top:198.69px;font-size:11px;line-height:11px;color:#000;text-align:right;">472.00</div>
<div class="t" style="right:215px;top:198.69px;font-size:11px;line-height:11px;color:#000;text-align:right;">472,000.00</div>
<div class="t" style="left:581px;top:198.69px;font-size:11px;line-height:11px;color:#000;">18%</div>
<div class="t" style="right:34px;top:198.69px;font-size:11px;line-height:11px;color:#000;text-align:right;">72000.00</div>
<div class="a" style="left:757px;top:179px;width:18px;height:41px;background:#ECE9D8;"></div>
<div class="a" style="left:757px;top:197px;width:16px;height:5px;background:#F3F1EA;"></div>
<div class="a" style="left:757px;top:182px;width:16px;height:16px;border:1px solid #C3D3FD;border-radius:2px;background:linear-gradient(135deg,#DCE6FE 0%,#C1D3FB 50%,#B4C8F6 100%)"></div>
<svg style="left:0;top:0" width="789" height="533" viewBox="0 0 789 533"><path d="M761 192L765 188L769 192" stroke="#4D6185" stroke-width="2.4" fill="none"/></svg>
<div class="a" style="left:757px;top:202px;width:16px;height:16px;border:1px solid #C3D3FD;border-radius:2px;background:linear-gradient(135deg,#DCE6FE 0%,#C1D3FB 50%,#B4C8F6 100%)"></div>
<svg style="left:0;top:0" width="789" height="533" viewBox="0 0 789 533"><path d="M761 208L765 212L769 208" stroke="#4D6185" stroke-width="2.4" fill="none"/></svg>
<div class="t" style="left:14px;top:228.84px;font-size:12px;line-height:12px;font-weight:bold;color:#000080;letter-spacing:0.15px">Итого на сумму:  472,000.00 руб.</div>
<div class="a" style="left:786px;top:30px;width:3px;height:230px;background:linear-gradient(90deg,#6E88E0,#7890E0 50%,#6670C8)"></div>
<div class="a" style="left:785px;top:31px;width:1px;height:229px;background:#FFFFFF;"></div>
<div class="a" style="left:0px;top:30px;width:2px;height:230px;background:#7A96DF;"></div>
<div class="a" style="left:0;top:247px;width:789px;height:286px;background:#0A56E8;border-radius:4px 6px 0 0;overflow:hidden">
<div class="a" style="left:0;top:0;width:789px;height:30px;background:linear-gradient(#0C46D0 0px,#3D8EFA 1px,#2C7BF6 3px,#0C5EF0 7px,#0658EE 16px,#0B62F4 24px,#085AEE 27px,#0546D2 30px)"></div>
</div>
<div class="t" style="left:24px;top:257.15px;font-size:14px;line-height:14px;font-weight:bold;color:#FFFFFF;transform:scaleX(0.92);transform-origin:0 0;letter-spacing:0px">Бухгалтерские</div>
<div class="t" style="left:123.5px;top:257.15px;font-size:14px;line-height:14px;font-weight:bold;color:#FFFFFF;transform:scaleX(0.9);transform-origin:0 0;letter-spacing:0px">проводки</div>
<div class="t" style="left:191px;top:257.15px;font-size:14px;line-height:14px;font-weight:bold;color:#FFFFFF;transform:scaleX(1);transform-origin:0 0;letter-spacing:0px">:</div>
<div class="t" style="left:199.5px;top:257.15px;font-size:14px;line-height:14px;font-weight:bold;color:#FFFFFF;transform:scaleX(0.915);transform-origin:0 0;letter-spacing:0px">Поступление</div>
<div class="t" style="left:288.5px;top:257.15px;font-size:14px;line-height:14px;font-weight:bold;color:#FFFFFF;transform:scaleX(0.87);transform-origin:0 0;letter-spacing:0px">МПЗ</div>
<div class="t" style="left:319px;top:257.15px;font-size:14px;line-height:14px;font-weight:bold;color:#FFFFFF;transform:scaleX(1);transform-origin:0 0;letter-spacing:0.3px">000001</div>
<div class="t" style="left:371px;top:257.15px;font-size:14px;line-height:14px;font-weight:bold;color:#FFFFFF;transform:scaleX(1);transform-origin:0 0;letter-spacing:0.75px">(02.02.04)</div>
<svg style="left:5px;top:256px" width="16" height="14" viewBox="0 0 16 14" shape-rendering="crispEdges"><rect x="0" y="0" width="6" height="11" fill="#000"/><rect x="1" y="1" width="4" height="9" fill="#808000"/><rect x="1" y="1" width="1" height="9" fill="#FFFFFF"/><rect x="2" y="2" width="1" height="1" fill="#FFFFFF"/><rect x="2" y="4" width="1" height="1" fill="#FFFFFF"/><rect x="2" y="6" width="1" height="1" fill="#FFFFFF"/><rect x="2" y="8" width="1" height="1" fill="#FFFFFF"/><rect x="2" y="11" width="4" height="2" fill="#000"/><rect x="5" y="2" width="11" height="12" fill="#000"/><rect x="6" y="3" width="9" height="10" fill="#FFFF00"/><rect x="6" y="3" width="1" height="1" fill="#FFFFFF"/><rect x="10" y="3" width="1" height="1" fill="#FFFFFF"/><rect x="12" y="3" width="1" height="1" fill="#FFFFFF"/><rect x="14" y="3" width="1" height="1" fill="#FFFFFF"/><rect x="6" y="5" width="1" height="1" fill="#FFFFFF"/><rect x="11" y="5" width="1" height="1" fill="#FFFFFF"/><rect x="13" y="5" width="1" height="1" fill="#FFFFFF"/><rect x="10" y="6" width="1" height="1" fill="#FFFFFF"/><rect x="12" y="6" width="1" height="1" fill="#FFFFFF"/><rect x="14" y="6" width="1" height="1" fill="#FFFFFF"/><rect x="6" y="8" width="1" height="1" fill="#FFFFFF"/><rect x="11" y="8" width="1" height="1" fill="#FFFFFF"/><rect x="13" y="8" width="1" height="1" fill="#FFFFFF"/><rect x="10" y="9" width="1" height="1" fill="#FFFFFF"/><rect x="12" y="9" width="1" height="1" fill="#FFFFFF"/><rect x="14" y="9" width="1" height="1" fill="#FFFFFF"/><rect x="6" y="11" width="1" height="1" fill="#FFFFFF"/><rect x="11" y="11" width="1" height="1" fill="#FFFFFF"/><rect x="13" y="11" width="1" height="1" fill="#FFFFFF"/><rect x="10" y="12" width="1" height="1" fill="#FFFFFF"/><rect x="12" y="12" width="1" height="1" fill="#FFFFFF"/><rect x="14" y="12" width="1" height="1" fill="#FFFFFF"/><rect x="7" y="3" width="3" height="2" fill="#0000FF"/><rect x="11" y="4" width="1" height="1" fill="#C00000"/><rect x="13" y="4" width="1" height="1" fill="#C00000"/><rect x="7" y="6" width="3" height="2" fill="#0000FF"/><rect x="11" y="7" width="1" height="1" fill="#C00000"/><rect x="13" y="7" width="1" height="1" fill="#C00000"/><rect x="7" y="9" width="3" height="2" fill="#0000FF"/><rect x="11" y="10" width="1" height="1" fill="#C00000"/><rect x="13" y="10" width="1" height="1" fill="#C00000"/><rect x="7" y="12" width="1" height="1" fill="#808000"/><rect x="9" y="12" width="1" height="1" fill="#808000"/><rect x="11" y="12" width="1" height="1" fill="#808000"/><rect x="13" y="12" width="1" height="1" fill="#808000"/></svg>
<div class="a" style="left:717px;top:253px;width:21px;height:21px;border:1px solid #FFFFFF;border-radius:3px;background:linear-gradient(135deg,#79AAFF 0%,#3B76F4 45%,#2258E8 100%)">
<div class="a" style="left:4px;top:12px;width:7px;height:3px;background:#fff"></div>
</div>
<div class="a" style="left:740px;top:253px;width:21px;height:21px;border:1px solid #FFFFFF;border-radius:3px;background:linear-gradient(135deg,#79AAFF 0%,#3B76F4 45%,#2258E8 100%)">
<div class="a" style="left:4px;top:4px;width:11px;height:11px;border:1px solid #fff;border-top-width:3px"></div>
</div>
<div class="a" style="left:763px;top:253px;width:21px;height:21px;border:1px solid #FFFFFF;border-radius:3px;background:linear-gradient(135deg,#F49A7A 0%,#E6602F 45%,#D0441A 100%)">
<svg style="left:4px;top:4px" width="11" height="11" viewBox="0 0 11 11"><path d="M1 1L10 10M10 1L1 10" stroke="#fff" stroke-width="1.9"/></svg>
</div>
<div class="a" style="left:3px;top:277px;width:783px;height:252px;background:#ECE9D8;"></div>
<div class="a" style="left:3px;top:528px;width:783px;height:1px;background:#FFFFFF;"></div>
<div class="a" style="left:785px;top:278px;width:1px;height:251px;background:#FFFFFF;"></div>
<div class="a" style="left:3px;top:277px;width:783px;height:1px;background:#FFFFFF;"></div>
<svg style="left:0;top:0" width="789" height="533" viewBox="0 0 789 533" shape-rendering="crispEdges"><g transform="translate(11,283)"><rect x="3" y="2" width="12" height="7" fill="#000080"/><rect x="4" y="3" width="1" height="1" fill="#fff"/><rect x="7" y="3" width="1" height="1" fill="#fff"/><rect x="10" y="3" width="1" height="1" fill="#fff"/><rect x="13" y="3" width="1" height="1" fill="#fff"/><rect x="4" y="5" width="10" height="3" fill="#fff"/><rect x="5" y="6" width="2" height="1" fill="#000"/><rect x="8" y="6" width="2" height="1" fill="#000"/><rect x="11" y="6" width="2" height="1" fill="#000"/><rect x="1" y="8" width="12" height="5" fill="#000"/><rect x="2" y="9" width="10" height="3" fill="#fff"/><rect x="3" y="10" width="1" height="1" fill="#000"/><rect x="6" y="10" width="1" height="1" fill="#000"/><rect x="9" y="10" width="1" height="1" fill="#000"/><rect x="0" y="2" width="1" height="1" fill="#ff0"/><rect x="1" y="1" width="1" height="1" fill="#ff0"/><rect x="3" y="1" width="1" height="1" fill="#fff"/><rect x="4" y="0" width="1" height="1" fill="#ff0"/><rect x="5" y="1" width="1" height="1" fill="#ff0"/><rect x="2" y="2" width="1" height="1" fill="#fff"/><rect x="3" y="2" width="1" height="1" fill="#ff0"/><rect x="4" y="2" width="1" height="1" fill="#fff"/><rect x="1" y="3" width="1" height="1" fill="#ff0"/><rect x="2" y="3" width="1" height="1" fill="#ff0"/><rect x="3" y="3" width="1" height="1" fill="#fff"/><rect x="0" y="4" width="1" height="1" fill="#fff"/><rect x="2" y="4" width="1" height="1" fill="#fff"/><rect x="4" y="4" width="1" height="1" fill="#ff0"/><rect x="0" y="5" width="1" height="1" fill="#ff0"/><rect x="2" y="5" width="1" height="1" fill="#ff0"/><rect x="3" y="5" width="1" height="1" fill="#000"/><rect x="5" y="3" width="1" height="1" fill="#ff0"/></g><g transform="translate(35,283)"><rect x="0" y="8" width="12" height="7" fill="#000080"/><rect x="1" y="11" width="10" height="3" fill="#fff"/><rect x="1" y="9" width="1" height="1" fill="#fff"/><rect x="4" y="9" width="1" height="1" fill="#fff"/><rect x="7" y="9" width="1" height="1" fill="#fff"/><rect x="10" y="9" width="1" height="1" fill="#fff"/><rect x="2" y="12" width="2" height="1" fill="#000"/><rect x="5" y="12" width="2" height="1" fill="#000"/><rect x="8" y="12" width="2" height="1" fill="#000"/><path d="M6 3L16 14" stroke="#000" stroke-width="2" shape-rendering="auto"/><path d="M6 3L8 5" stroke="#FFFF00" stroke-width="2" shape-rendering="auto"/><rect x="9" y="2" width="1" height="1" fill="#C00000"/><rect x="13" y="1" width="1" height="1" fill="#C00000"/><rect x="11" y="6" width="1" height="1" fill="#C00000"/><rect x="15" y="6" width="1" height="1" fill="#C00000"/></g><g transform="translate(61,284)"><path d="M0.5 0.5H8.5L11.5 3.5V13.5H0.5Z" fill="#fff" stroke="#000"/><rect x="1" y="13" width="11" height="1" fill="#000"/><rect x="11" y="3" width="1" height="11" fill="#000"/><path d="M8.5 0.5V3.5H11.5" fill="#ccc" stroke="#888"/><rect x="2" y="3" width="5" height="1" fill="#000"/><rect x="2" y="5" width="8" height="1" fill="#000"/><rect x="2" y="7" width="8" height="1" fill="#000"/><rect x="2" y="9" width="8" height="1" fill="#000"/><rect x="2" y="11" width="8" height="1" fill="#000"/></g><g transform="translate(81,283)"><rect x="1" y="1" width="12" height="7" fill="#000080"/><rect x="2" y="2" width="1" height="1" fill="#fff"/><rect x="5" y="2" width="1" height="1" fill="#fff"/><rect x="8" y="2" width="1" height="1" fill="#fff"/><rect x="11" y="2" width="1" height="1" fill="#fff"/><rect x="2" y="4" width="10" height="3" fill="#fff"/><rect x="3" y="5" width="2" height="1" fill="#000"/><rect x="6" y="5" width="2" height="1" fill="#000"/><rect x="9" y="5" width="2" height="1" fill="#000"/><rect x="0" y="7" width="12" height="5" fill="#000"/><rect x="1" y="8" width="10" height="3" fill="#fff"/><rect x="2" y="9" width="1" height="1" fill="#000"/><rect x="5" y="9" width="1" height="1" fill="#000"/><rect x="8" y="9" width="1" height="1" fill="#000"/><rect x="11" y="13" width="5" height="1" fill="#000"/><rect x="13" y="11" width="1" height="5" fill="#000"/></g><g transform="translate(104,283)"><rect x="0" y="8" width="12" height="7" fill="#000080"/><rect x="1" y="11" width="10" height="3" fill="#fff"/><rect x="1" y="9" width="1" height="1" fill="#fff"/><rect x="4" y="9" width="1" height="1" fill="#fff"/><rect x="7" y="9" width="1" height="1" fill="#fff"/><rect x="10" y="9" width="1" height="1" fill="#fff"/><rect x="2" y="12" width="2" height="1" fill="#000"/><rect x="5" y="12" width="2" height="1" fill="#000"/><rect x="8" y="12" width="2" height="1" fill="#000"/><path d="M6 3L16 14" stroke="#000" stroke-width="2" shape-rendering="auto"/><path d="M6 3L8 5" stroke="#FFFF00" stroke-width="2" shape-rendering="auto"/><rect x="9" y="2" width="1" height="1" fill="#C00000"/><rect x="13" y="1" width="1" height="1" fill="#C00000"/><rect x="11" y="6" width="1" height="1" fill="#C00000"/><rect x="15" y="6" width="1" height="1" fill="#C00000"/><rect x="9" y="12" width="6" height="1" fill="#F00"/><rect x="11" y="10" width="1" height="6" fill="#F00"/><rect x="10" y="12" width="5" height="1" fill="#F00"/></g><g transform="translate(128,283)"><g transform="translate(1,1)"><rect x="0" y="0" width="9" height="11" fill="#FFFFFF"/><rect x="1" y="1" width="7" height="9" fill="#fff"/><rect x="2" y="3" width="5" height="1" fill="#FFFFFF"/><rect x="2" y="5" width="5" height="1" fill="#FFFFFF"/><rect x="2" y="7" width="5" height="1" fill="#FFFFFF"/><rect x="5" y="5" width="11" height="10" fill="#FFFFFF"/><rect x="6" y="6" width="9" height="8" fill="#FFFFFF"/><rect x="7" y="8" width="7" height="1" fill="#FFFFFF"/><rect x="7" y="10" width="7" height="1" fill="#FFFFFF"/><rect x="7" y="12" width="7" height="1" fill="#FFFFFF"/></g><rect x="0" y="0" width="9" height="11" fill="#ACA899"/><rect x="1" y="1" width="7" height="9" fill="#fff"/><rect x="2" y="3" width="5" height="1" fill="#ACA899"/><rect x="2" y="5" width="5" height="1" fill="#ACA899"/><rect x="2" y="7" width="5" height="1" fill="#ACA899"/><rect x="5" y="5" width="11" height="10" fill="#ACA899"/><rect x="6" y="6" width="9" height="8" fill="#DAD7C8"/><rect x="7" y="8" width="7" height="1" fill="#ACA899"/><rect x="7" y="10" width="7" height="1" fill="#ACA899"/><rect x="7" y="12" width="7" height="1" fill="#ACA899"/></g><g transform="translate(151,284)"><path d="M1.5 1.5H9.5L11.5 3.5V14.5H1.5Z" fill="#fff" stroke="#808000"/><rect x="2" y="14" width="10" height="1" fill="#000"/><rect x="11" y="4" width="1" height="11" fill="#000"/><text x="-1" y="12" font-family="Liberation Serif" font-weight="bold" font-size="12" fill="#0000E0" stroke="#0000C0" stroke-width="0.4">D</text><text x="5" y="14" font-family="Liberation Serif" font-weight="bold" font-size="12" fill="#B00000" stroke="#900000" stroke-width="0.4">K</text></g><g transform="translate(173,284)"><path d="M0.5 0.5H8.5L10.5 2.5V12.5H0.5Z" fill="#fff" stroke="#000"/><rect x="1" y="12" width="10" height="1" fill="#000"/><rect x="10" y="3" width="1" height="10" fill="#000"/><rect x="2" y="2" width="7" height="1" fill="#000"/><rect x="2" y="4" width="7" height="1" fill="#000"/><rect x="2" y="6" width="7" height="1" fill="#000"/><rect x="2" y="8" width="7" height="1" fill="#000"/><rect x="3" y="10" width="13" height="6" fill="#000"/><rect x="4" y="10" width="11" height="1" fill="#000080"/><rect x="4" y="12" width="4" height="2" fill="#fff"/><rect x="10" y="12" width="4" height="2" fill="#fff"/><path d="M14.5 2L9.5 13" stroke="#000" stroke-width="3" shape-rendering="auto"/><path d="M14.5 2L9.5 13" stroke="#FFFF00" stroke-width="1.2" shape-rendering="auto"/></g><g transform="translate(197,283)"><rect x="5" y="9" width="11" height="7" fill="#000"/><rect x="6" y="10" width="9" height="5" fill="#fff"/><rect x="7" y="11" width="2" height="1" fill="#C00000"/><rect x="10" y="11" width="2" height="1" fill="#C00000"/><rect x="13" y="11" width="2" height="1" fill="#C00000"/><rect x="7" y="13" width="2" height="1" fill="#C00000"/><rect x="10" y="13" width="2" height="1" fill="#C00000"/><rect x="13" y="13" width="2" height="1" fill="#C00000"/><circle cx="10.5" cy="5.5" r="4.5" fill="#00E0E8" stroke="#000" shape-rendering="auto"/><rect x="9" y="4" width="2" height="1" fill="#C00000"/><rect x="10" y="6" width="2" height="1" fill="#C00000"/><rect x="9" y="8" width="1" height="1" fill="#fff"/><path d="M1 15L6.5 9.5" stroke="#000" stroke-width="3" shape-rendering="auto"/><path d="M1 15L6.5 9.5" stroke="#FFFF00" stroke-width="1" stroke-dasharray="1.5 1" shape-rendering="auto"/><path d="M0.5 15.5L2.5 13.5" stroke="#0000C0" stroke-width="2.5" shape-rendering="auto"/></g><g transform="translate(219,283)"><rect x="1" y="1" width="12" height="7" fill="#000080"/><rect x="2" y="2" width="1" height="1" fill="#fff"/><rect x="5" y="2" width="1" height="1" fill="#fff"/><rect x="8" y="2" width="1" height="1" fill="#fff"/><rect x="11" y="2" width="1" height="1" fill="#fff"/><rect x="2" y="4" width="10" height="3" fill="#fff"/><rect x="3" y="5" width="2" height="1" fill="#000"/><rect x="6" y="5" width="2" height="1" fill="#000"/><rect x="9" y="5" width="2" height="1" fill="#000"/><rect x="0" y="7" width="12" height="5" fill="#000"/><rect x="1" y="8" width="10" height="3" fill="#fff"/><rect x="2" y="9" width="1" height="1" fill="#000"/><rect x="5" y="9" width="1" height="1" fill="#000"/><rect x="8" y="9" width="1" height="1" fill="#000"/><path d="M6.5 6.5L14.5 14.5M14.5 6.5L6.5 14.5" stroke="#C00000" stroke-width="1.6" fill="none" shape-rendering="auto"/></g><g transform="translate(242,285)"><g transform="translate(1,1)"><rect x="0" y="1" width="1" height="11" fill="#FFFFFF"/><rect x="1" y="1" width="2" height="1" fill="#FFFFFF"/><rect x="1" y="11" width="2" height="1" fill="#FFFFFF"/><rect x="15" y="1" width="1" height="11" fill="#FFFFFF"/><rect x="13" y="1" width="2" height="1" fill="#FFFFFF"/><rect x="13" y="11" width="2" height="1" fill="#FFFFFF"/><rect x="3" y="6" width="10" height="1" fill="#FFFFFF"/><path d="M2 6.5L5.5 3V10Z M14 6.5L10.5 3V10Z" fill="#FFFFFF"/><rect x="1" y="12" width="3" height="1" fill="#fff"/><rect x="16" y="2" width="1" height="11" fill="#fff"/></g><rect x="0" y="1" width="1" height="11" fill="#ACA899"/><rect x="1" y="1" width="2" height="1" fill="#ACA899"/><rect x="1" y="11" width="2" height="1" fill="#ACA899"/><rect x="15" y="1" width="1" height="11" fill="#ACA899"/><rect x="13" y="1" width="2" height="1" fill="#ACA899"/><rect x="13" y="11" width="2" height="1" fill="#ACA899"/><rect x="3" y="6" width="10" height="1" fill="#ACA899"/><path d="M2 6.5L5.5 3V10Z M14 6.5L10.5 3V10Z" fill="#ACA899"/><rect x="1" y="12" width="3" height="1" fill="#fff"/><rect x="16" y="2" width="1" height="11" fill="#fff"/></g><g transform="translate(265,284)"><g transform="translate(1,1)"><text x="4" y="6" font-family="Liberation Sans" font-weight="bold" font-size="7" fill="#FFFFFF">N</text><rect x="0" y="9" width="5" height="6" fill="#FFFFFF"/><rect x="7" y="9" width="5" height="6" fill="#FFFFFF"/><rect x="2" y="7" width="2" height="3" fill="#FFFFFF"/><rect x="8" y="7" width="2" height="3" fill="#FFFFFF"/><rect x="4" y="10" width="4" height="3" fill="#FFFFFF"/><rect x="1" y="13" width="2" height="1" fill="#fff"/><rect x="8" y="13" width="2" height="1" fill="#fff"/></g><text x="4" y="6" font-family="Liberation Sans" font-weight="bold" font-size="7" fill="#ACA899">N</text><rect x="0" y="9" width="5" height="6" fill="#ACA899"/><rect x="7" y="9" width="5" height="6" fill="#ACA899"/><rect x="2" y="7" width="2" height="3" fill="#ACA899"/><rect x="8" y="7" width="2" height="3" fill="#ACA899"/><rect x="4" y="10" width="4" height="3" fill="#ACA899"/><rect x="1" y="13" width="2" height="1" fill="#fff"/><rect x="8" y="13" width="2" height="1" fill="#fff"/></g><g transform="translate(288,285)"><g transform="translate(1,1)"><rect x="0" y="1" width="3" height="12" fill="#FFFFFF"/><rect x="3" y="2" width="4" height="2" fill="#FFFFFF"/><rect x="3" y="6" width="4" height="2" fill="#FFFFFF"/><rect x="3" y="10" width="4" height="2" fill="#FFFFFF"/><rect x="7" y="6" width="6" height="2" fill="#FFFFFF"/><path d="M12 3.5L16 7L12 10.5Z" fill="#FFFFFF"/><rect x="1" y="13" width="3" height="1" fill="#fff"/></g><rect x="0" y="1" width="3" height="12" fill="#ACA899"/><rect x="3" y="2" width="4" height="2" fill="#ACA899"/><rect x="3" y="6" width="4" height="2" fill="#ACA899"/><rect x="3" y="10" width="4" height="2" fill="#ACA899"/><rect x="7" y="6" width="6" height="2" fill="#ACA899"/><path d="M12 3.5L16 7L12 10.5Z" fill="#ACA899"/><rect x="1" y="13" width="3" height="1" fill="#fff"/></g><g transform="translate(312,285)"><g transform="translate(1,1)"><rect x="0" y="0" width="14" height="2" fill="#FFFFFF"/><rect x="2" y="3" width="9" height="1" fill="#FFFFFF"/><rect x="0" y="7" width="7" height="2" fill="#FFFFFF"/><path d="M6 4.5L10 8L6 11.5Z" fill="#FFFFFF"/><rect x="10" y="2" width="2" height="12" fill="#FFFFFF"/><rect x="12" y="5" width="2" height="1" fill="#FFFFFF"/><rect x="12" y="7" width="2" height="1" fill="#FFFFFF"/><rect x="12" y="9" width="2" height="1" fill="#FFFFFF"/><rect x="12" y="11" width="2" height="1" fill="#FFFFFF"/><rect x="12" y="13" width="2" height="1" fill="#FFFFFF"/><rect x="11" y="14" width="3" height="1" fill="#fff"/></g><rect x="0" y="0" width="14" height="2" fill="#ACA899"/><rect x="2" y="3" width="9" height="1" fill="#ACA899"/><rect x="0" y="7" width="7" height="2" fill="#ACA899"/><path d="M6 4.5L10 8L6 11.5Z" fill="#ACA899"/><rect x="10" y="2" width="2" height="12" fill="#ACA899"/><rect x="12" y="5" width="2" height="1" fill="#ACA899"/><rect x="12" y="7" width="2" height="1" fill="#ACA899"/><rect x="12" y="9" width="2" height="1" fill="#ACA899"/><rect x="12" y="11" width="2" height="1" fill="#ACA899"/><rect x="12" y="13" width="2" height="1" fill="#ACA899"/><rect x="11" y="14" width="3" height="1" fill="#fff"/></g><g transform="translate(335,285)"><g transform="translate(1,1)"><rect x="5" y="0" width="11" height="8" fill="#FFFFFF"/><rect x="6" y="2" width="9" height="5" fill="#ECE9D8"/><rect x="3" y="2" width="11" height="8" fill="#FFFFFF"/><rect x="4" y="4" width="9" height="5" fill="#ECE9D8"/><rect x="0" y="5" width="11" height="9" fill="#FFFFFF"/><rect x="1" y="7" width="9" height="6" fill="#ECE9D8"/><rect x="3" y="9" width="4" height="1" fill="#FFFFFF"/><path d="M6 7L9 9.5L6 12Z" fill="#FFFFFF"/><rect x="1" y="14" width="11" height="1" fill="#fff"/></g><rect x="5" y="0" width="11" height="8" fill="#ACA899"/><rect x="6" y="2" width="9" height="5" fill="#ECE9D8"/><rect x="3" y="2" width="11" height="8" fill="#ACA899"/><rect x="4" y="4" width="9" height="5" fill="#ECE9D8"/><rect x="0" y="5" width="11" height="9" fill="#ACA899"/><rect x="1" y="7" width="9" height="6" fill="#ECE9D8"/><rect x="3" y="9" width="4" height="1" fill="#ACA899"/><path d="M6 7L9 9.5L6 12Z" fill="#ACA899"/><rect x="1" y="14" width="11" height="1" fill="#fff"/></g><g transform="translate(357,285)"><g transform="translate(1,1)"><rect x="0" y="1" width="3" height="12" fill="#FFFFFF"/><rect x="3" y="2" width="3" height="2" fill="#FFFFFF"/><rect x="3" y="6" width="3" height="2" fill="#FFFFFF"/><rect x="3" y="10" width="3" height="2" fill="#FFFFFF"/><path d="M6 3L10 7M6 11L10 7" stroke="#FFFFFF" stroke-width="2" shape-rendering="auto"/><rect x="9" y="6" width="4" height="2" fill="#FFFFFF"/><path d="M12 3.5L16 7L12 10.5Z" fill="#FFFFFF"/><rect x="1" y="13" width="3" height="1" fill="#fff"/></g><rect x="0" y="1" width="3" height="12" fill="#ACA899"/><rect x="3" y="2" width="3" height="2" fill="#ACA899"/><rect x="3" y="6" width="3" height="2" fill="#ACA899"/><rect x="3" y="10" width="3" height="2" fill="#ACA899"/><path d="M6 3L10 7M6 11L10 7" stroke="#ACA899" stroke-width="2" shape-rendering="auto"/><rect x="9" y="6" width="4" height="2" fill="#ACA899"/><path d="M12 3.5L16 7L12 10.5Z" fill="#ACA899"/><rect x="1" y="13" width="3" height="1" fill="#fff"/></g><g transform="translate(380,283)"><rect x="4" y="0" width="1" height="16" fill="#ACA899"/><rect x="0" y="7" width="6" height="1" fill="#800000"/><path d="M8 7.5L5 4.5V10.5Z" fill="#C00000"/><rect x="6" y="5" width="10" height="8" fill="#000"/><rect x="7" y="6" width="8" height="6" fill="#ff0"/><rect x="7" y="6" width="1" height="1" fill="#fff"/><rect x="9" y="6" width="1" height="1" fill="#fff"/><rect x="11" y="6" width="1" height="1" fill="#fff"/><rect x="13" y="6" width="1" height="1" fill="#fff"/><rect x="8" y="7" width="1" height="1" fill="#fff"/><rect x="12" y="7" width="1" height="1" fill="#fff"/><rect x="14" y="8" width="1" height="1" fill="#fff"/><rect x="7" y="10" width="1" height="1" fill="#fff"/><rect x="9" y="11" width="1" height="1" fill="#fff"/><rect x="11" y="11" width="1" height="1" fill="#fff"/><rect x="13" y="11" width="1" height="1" fill="#fff"/><rect x="8" y="8" width="3" height="2" fill="#00f"/><rect x="11" y="9" width="3" height="2" fill="#f00"/><rect x="6" y="3" width="2" height="1" fill="#000"/><rect x="6" y="14" width="2" height="1" fill="#000"/><rect x="9" y="3" width="2" height="1" fill="#000"/><rect x="9" y="14" width="2" height="1" fill="#000"/><rect x="12" y="3" width="2" height="1" fill="#000"/><rect x="12" y="14" width="2" height="1" fill="#000"/><rect x="15" y="3" width="2" height="1" fill="#000"/><rect x="15" y="14" width="2" height="1" fill="#000"/></g><g transform="translate(405,284)"><path d="M0.5 14.5V0.5H9.5L12.5 3.5V14.5Z" fill="#fff" stroke="#808000"/><rect x="1" y="14" width="12" height="1" fill="#000"/><rect x="12" y="4" width="1" height="11" fill="#000"/><path d="M9.5 0.5V3.5H12.5" fill="#DDD" stroke="#808000"/><text x="2.5" y="11.5" font-family="Liberation Sans" font-weight="bold" font-size="12" fill="#000080">?</text></g><g transform="translate(427,284)"><path d="M0.5 0.5V12.5L3.5 10L6 14.5L8 13.5L5.8 9.2H9.5Z" fill="#fff" stroke="#000" stroke-width="1.1" shape-rendering="auto"/><text x="8" y="8" font-family="Liberation Sans" font-weight="bold" font-size="11" fill="#000080">?</text></g></svg>
<div class="a" style="left:3px;top:306px;width:783px;height:1px;background:#ACA899;"></div>
<div class="a" style="left:3px;top:306px;width:1px;height:223px;background:#ACA899;"></div>
<div class="a" style="left:4px;top:307px;width:782px;height:1px;background:#716F64;"></div>
<div class="a" style="left:4px;top:307px;width:1px;height:222px;background:#716F64;"></div>
<div class="a" style="left:8px;top:313px;width:773px;height:175px;background:#000;"></div>
<div class="a" style="left:9px;top:314px;width:771px;height:173px;background:#ACA899;"></div>
<div class="a" style="left:11px;top:316px;width:769px;height:169px;background:#ECE9D8;"></div>
<div class="a" style="left:9px;top:486px;width:771px;height:1px;background:#F1EFE2;"></div>
<div class="a" style="left:9px;top:485px;width:771px;height:1px;background:#F1EFE2;"></div>
<div class="a" style="left:39px;top:346px;width:722px;height:139px;background:#FFFFFF;"></div>
<div class="a" style="left:11px;top:316px;width:25px;height:1px;background:#FFFFFF;"></div>
<div class="a" style="left:11px;top:316px;width:1px;height:28px;background:#FFFFFF;"></div>
<div class="a" style="left:35px;top:316px;width:1px;height:28px;background:#ACA899;"></div>
<div class="a" style="left:12px;top:343px;width:24px;height:1px;background:#ACA899;"></div>
<div class="a" style="left:39px;top:316px;width:40px;height:1px;background:#FFFFFF;"></div>
<div class="a" style="left:39px;top:316px;width:1px;height:28px;background:#FFFFFF;"></div>
<div class="a" style="left:78px;top:316px;width:1px;height:28px;background:#ACA899;"></div>
<div class="a" style="left:40px;top:343px;width:39px;height:1px;background:#ACA899;"></div>
<div class="a" style="left:82px;top:316px;width:67px;height:1px;background:#FFFFFF;"></div>
<div class="a" style="left:82px;top:316px;width:1px;height:28px;background:#FFFFFF;"></div>
<div class="a" style="left:148px;top:316px;width:1px;height:28px;background:#ACA899;"></div>
<div class="a" style="left:83px;top:343px;width:66px;height:1px;background:#ACA899;"></div>
<div class="a" style="left:152px;top:316px;width:94px;height:1px;background:#FFFFFF;"></div>
<div class="a" style="left:152px;top:316px;width:1px;height:28px;background:#FFFFFF;"></div>
<div class="a" style="left:245px;top:316px;width:1px;height:28px;background:#ACA899;"></div>
<div class="a" style="left:153px;top:343px;width:93px;height:1px;background:#ACA899;"></div>
<div class="a" style="left:249px;top:316px;width:60px;height:1px;background:#FFFFFF;"></div>
<div class="a" style="left:249px;top:316px;width:1px;height:28px;background:#FFFFFF;"></div>
<div class="a" style="left:308px;top:316px;width:1px;height:28px;background:#ACA899;"></div>
<div class="a" style="left:250px;top:343px;width:59px;height:1px;background:#ACA899;"></div>
<div class="a" style="left:312px;top:316px;width:94px;height:1px;background:#FFFFFF;"></div>
<div class="a" style="left:312px;top:316px;width:1px;height:28px;background:#FFFFFF;"></div>
<div class="a" style="left:405px;top:316px;width:1px;height:28px;background:#ACA899;"></div>
<div class="a" style="left:313px;top:343px;width:93px;height:1px;background:#ACA899;"></div>
<div class="a" style="left:409px;top:316px;width:94px;height:1px;background:#FFFFFF;"></div>
<div class="a" style="left:409px;top:316px;width:1px;height:28px;background:#FFFFFF;"></div>
<div class="a" style="left:502px;top:316px;width:1px;height:28px;background:#ACA899;"></div>
<div class="a" style="left:410px;top:343px;width:93px;height:1px;background:#ACA899;"></div>
<div class="a" style="left:506px;top:316px;width:255px;height:1px;background:#FFFFFF;"></div>
<div class="a" style="left:506px;top:316px;width:1px;height:28px;background:#FFFFFF;"></div>
<div class="a" style="left:760px;top:316px;width:1px;height:28px;background:#ACA899;"></div>
<div class="a" style="left:507px;top:343px;width:254px;height:1px;background:#ACA899;"></div>
<div class="a" style="left:36px;top:314px;width:1px;height:171px;background:#000;"></div>
<div class="a" style="left:37px;top:316px;width:1px;height:169px;background:#FFFFFF;"></div>
<div class="a" style="left:38px;top:314px;width:1px;height:171px;background:#000;"></div>
<div class="a" style="left:79px;top:314px;width:1px;height:171px;background:#000;"></div>
<div class="a" style="left:80px;top:316px;width:1px;height:169px;background:#FFFFFF;"></div>
<div class="a" style="left:81px;top:314px;width:1px;height:171px;background:#000;"></div>
<div class="a" style="left:149px;top:314px;width:1px;height:171px;background:#000;"></div>
<div class="a" style="left:150px;top:316px;width:1px;height:169px;background:#FFFFFF;"></div>
<div class="a" style="left:151px;top:314px;width:1px;height:171px;background:#000;"></div>
<div class="a" style="left:246px;top:314px;width:1px;height:171px;background:#000;"></div>
<div class="a" style="left:247px;top:316px;width:1px;height:169px;background:#FFFFFF;"></div>
<div class="a" style="left:248px;top:314px;width:1px;height:171px;background:#000;"></div>
<div class="a" style="left:309px;top:314px;width:1px;height:171px;background:#000;"></div>
<div class="a" style="left:310px;top:316px;width:1px;height:169px;background:#FFFFFF;"></div>
<div class="a" style="left:311px;top:314px;width:1px;height:171px;background:#000;"></div>
<div class="a" style="left:406px;top:314px;width:1px;height:171px;background:#000;"></div>
<div class="a" style="left:407px;top:316px;width:1px;height:169px;background:#FFFFFF;"></div>
<div class="a" style="left:408px;top:314px;width:1px;height:171px;background:#000;"></div>
<div class="a" style="left:503px;top:314px;width:1px;height:171px;background:#000;"></div>
<div class="a" style="left:504px;top:316px;width:1px;height:169px;background:#FFFFFF;"></div>
<div class="a" style="left:505px;top:314px;width:1px;height:171px;background:#000;"></div>
<div class="a" style="left:11px;top:343px;width:750px;height:1px;background:#FBF8EC;"></div>
<div class="a" style="left:11px;top:344px;width:750px;height:1px;background:#000;"></div>
<div class="a" style="left:11px;top:345px;width:750px;height:1px;background:#FBF8EC;"></div>
<div class="a" style="left:11px;top:346px;width:750px;height:1px;background:#000;"></div>
<div class="a" style="left:153px;top:329px;width:93px;height:1px;background:#ACA899;"></div>
<div class="a" style="left:152px;top:330px;width:94px;height:1px;background:#000;"></div>
<div class="a" style="left:152px;top:331px;width:94px;height:1px;background:#FFFFFF;"></div>
<div class="a" style="left:313px;top:329px;width:93px;height:1px;background:#ACA899;"></div>
<div class="a" style="left:312px;top:330px;width:94px;height:1px;background:#000;"></div>
<div class="a" style="left:312px;top:331px;width:94px;height:1px;background:#FFFFFF;"></div>
<div class="a" style="left:410px;top:329px;width:93px;height:1px;background:#ACA899;"></div>
<div class="a" style="left:409px;top:330px;width:94px;height:1px;background:#000;"></div>
<div class="a" style="left:409px;top:331px;width:94px;height:1px;background:#FFFFFF;"></div>
<div class="a" style="left:507px;top:329px;width:254px;height:1px;background:#ACA899;"></div>
<div class="a" style="left:506px;top:330px;width:255px;height:1px;background:#000;"></div>
<div class="a" style="left:506px;top:331px;width:255px;height:1px;background:#FFFFFF;"></div>
<div class="a" style="left:563px;top:316px;width:1px;height:14px;background:#000;"></div>
<div class="a" style="left:564px;top:316px;width:1px;height:14px;background:#FFFFFF;"></div>
<div class="a" style="left:562px;top:317px;width:1px;height:12px;background:#ACA899;"></div>
<div class="a" style="left:628px;top:316px;width:1px;height:14px;background:#000;"></div>
<div class="a" style="left:629px;top:316px;width:1px;height:14px;background:#FFFFFF;"></div>
<div class="a" style="left:627px;top:317px;width:1px;height:12px;background:#ACA899;"></div>
<div class="a" style="left:706px;top:331px;width:1px;height:13px;background:#000;"></div>
<div class="a" style="left:707px;top:331px;width:1px;height:13px;background:#FFFFFF;"></div>
<div class="a" style="left:705px;top:332px;width:1px;height:11px;background:#ACA899;"></div>
<div class="t" style="left:42px;top:317.27px;font-size:11.5px;line-height:11.5px;font-weight:bold;color:#000;">N</div>
<svg style="left:0;top:0" width="789" height="533" viewBox="0 0 789 533"><ellipse cx="51.75" cy="320.5" rx="0.95" ry="0.7" fill="none" stroke="#000" stroke-width="1.6"/><rect x="50" y="323" width="3.5" height="1.2" fill="#000"/></svg>
<div class="t" style="left:85px;top:316.84px;font-size:12px;line-height:12px;font-weight:bold;color:#000;letter-spacing:-0.1px;word-spacing:2px;-webkit-text-stroke:0.2px #000">Дебет</div>
<div class="t" style="left:155px;top:316.84px;font-size:12px;line-height:12px;font-weight:bold;color:#000;letter-spacing:-0.1px;word-spacing:2px;-webkit-text-stroke:0.2px #000">СубконтоДт</div>
<div class="t" style="left:252px;top:316.84px;font-size:12px;line-height:12px;font-weight:bold;color:#000;letter-spacing:-0.1px;word-spacing:2px;-webkit-text-stroke:0.2px #000">Кредит</div>
<div class="t" style="left:315px;top:316.84px;font-size:12px;line-height:12px;font-weight:bold;color:#000;letter-spacing:-0.1px;word-spacing:2px;-webkit-text-stroke:0.2px #000">СубконтоКт</div>
<div class="t" style="left:412px;top:316.84px;font-size:12px;line-height:12px;font-weight:bold;color:#000;letter-spacing:-0.1px;word-spacing:2px;-webkit-text-stroke:0.2px #000">Вал.</div>
<div class="t" style="left:509px;top:316.84px;font-size:12px;line-height:12px;font-weight:bold;color:#000;letter-spacing:-0.1px;word-spacing:2px;-webkit-text-stroke:0.2px #000">Кол-во</div>
<div class="t" style="left:567px;top:316.84px;font-size:12px;line-height:12px;font-weight:bold;color:#000;letter-spacing:-0.1px;word-spacing:2px;-webkit-text-stroke:0.2px #000">Вал.су...</div>
<div class="t" style="left:632px;top:316.84px;font-size:12px;line-height:12px;font-weight:bold;color:#000;letter-spacing:-0.1px;word-spacing:2px;-webkit-text-stroke:0.2px #000">Сумма</div>
<div class="a" style="left:155px;top:341px;width:2px;height:1px;background:#000;"></div>
<div class="a" style="left:159px;top:341px;width:2px;height:1px;background:#000;"></div>
<div class="a" style="left:163px;top:341px;width:2px;height:1px;background:#000;"></div>
<div class="a" style="left:315px;top:341px;width:2px;height:1px;background:#000;"></div>
<div class="a" style="left:319px;top:341px;width:2px;height:1px;background:#000;"></div>
<div class="a" style="left:323px;top:341px;width:2px;height:1px;background:#000;"></div>
<div class="t" style="left:412px;top:331.84px;font-size:12px;line-height:12px;font-weight:bold;color:#000;letter-spacing:-0.1px;word-spacing:2px;-webkit-text-stroke:0.2px #000">Курс</div>
<div class="t" style="left:509px;top:331.84px;font-size:12px;line-height:12px;font-weight:bold;color:#000;letter-spacing:-0.1px;word-spacing:2px;-webkit-text-stroke:0.2px #000">Сод.проводки</div>
<div class="t" style="left:710px;top:331.84px;font-size:12px;line-height:12px;font-weight:bold;color:#000;letter-spacing:-0.1px;word-spacing:2px;-webkit-text-stroke:0.2px #000">NЖ</div>
<div class="a" style="left:10px;top:391px;width:751px;height:1px;background:#000;"></div>
<div class="a" style="left:10px;top:436px;width:751px;height:1px;background:#000;"></div>
<div class="a" style="left:10px;top:481px;width:751px;height:1px;background:#000;"></div>
<div class="a" style="left:152px;top:361px;width:94px;height:1px;background:#000;"></div>
<div class="a" style="left:152px;top:376px;width:94px;height:1px;background:#000;"></div>
<div class="a" style="left:312px;top:361px;width:94px;height:1px;background:#000;"></div>
<div class="a" style="left:312px;top:376px;width:94px;height:1px;background:#000;"></div>
<div class="a" style="left:409px;top:361px;width:94px;height:1px;background:#000;"></div>
<div class="a" style="left:506px;top:361px;width:255px;height:1px;background:#000;"></div>
<div class="a" style="left:563px;top:346px;width:1px;height:15px;background:#000;"></div>
<div class="a" style="left:628px;top:346px;width:1px;height:15px;background:#000;"></div>
<div class="a" style="left:706px;top:362px;width:1px;height:29px;background:#000;"></div>
<div class="a" style="left:39px;top:347px;width:40px;height:44px;background:#316AC5;"></div>
<div class="a" style="left:39px;top:347px;width:40px;height:44px;border:1px dotted #E8A040"></div>
<svg style="left:0;top:0" width="789" height="533" viewBox="0 0 789 533" shape-rendering="crispEdges"><rect x="15" y="348" width="11" height="8" fill="#000080"/><rect x="16" y="349" width="9" height="6" fill="#FFFF00"/><rect x="17" y="350" width="3" height="2" fill="#0000FF"/><rect x="20" y="352" width="3" height="2" fill="#F00"/><rect x="20" y="355" width="8" height="6" fill="#000"/><rect x="20" y="355" width="5" height="1" fill="#808000"/><rect x="20" y="355" width="1" height="5" fill="#808000"/><rect x="21" y="356" width="6" height="4" fill="#00FFFF"/><rect x="22" y="357" width="1" height="1" fill="#fff"/><rect x="26" y="359" width="1" height="1" fill="#fff"/><path d="M22 357L23.5 360L27 353" stroke="#F00" stroke-width="1.6" fill="none" shape-rendering="auto"/><rect x="15" y="393" width="11" height="8" fill="#000080"/><rect x="16" y="394" width="9" height="6" fill="#FFFF00"/><rect x="17" y="395" width="3" height="2" fill="#0000FF"/><rect x="20" y="397" width="3" height="2" fill="#F00"/><rect x="20" y="400" width="8" height="6" fill="#000"/><rect x="20" y="400" width="5" height="1" fill="#808000"/><rect x="20" y="400" width="1" height="5" fill="#808000"/><rect x="21" y="401" width="6" height="4" fill="#00FFFF"/><rect x="22" y="402" width="1" height="1" fill="#fff"/><rect x="26" y="404" width="1" height="1" fill="#fff"/><path d="M22 402L23.5 405L27 398" stroke="#F00" stroke-width="1.6" fill="none" shape-rendering="auto"/><rect x="15" y="438" width="11" height="8" fill="#000080"/><rect x="16" y="439" width="9" height="6" fill="#FFFF00"/><rect x="17" y="440" width="3" height="2" fill="#0000FF"/><rect x="20" y="442" width="3" height="2" fill="#F00"/><rect x="20" y="445" width="8" height="6" fill="#000"/><rect x="20" y="445" width="5" height="1" fill="#808000"/><rect x="20" y="445" width="1" height="5" fill="#808000"/><rect x="21" y="446" width="6" height="4" fill="#00FFFF"/><rect x="22" y="447" width="1" height="1" fill="#fff"/><rect x="26" y="449" width="1" height="1" fill="#fff"/><path d="M22 447L23.5 450L27 443" stroke="#F00" stroke-width="1.6" fill="none" shape-rendering="auto"/></svg>
<div class="t" style="right:712px;top:348.69px;font-size:11px;line-height:11px;color:#FFFFFF;text-align:right;">1</div>
<div class="t" style="left:84px;top:348.69px;font-size:11px;line-height:11px;color:#000;">МХ.2</div>
<div class="t" style="left:155px;top:348.69px;font-size:11px;line-height:11px;color:#000;">Джинсы</div>
<div class="t" style="left:155px;top:363.69px;font-size:11px;line-height:11px;color:#000;">Основной</div>
<div class="t" style="left:516px;top:348.69px;font-size:11px;line-height:11px;color:#000;">1000.000</div>
<div class="t" style="left:508px;top:363.69px;font-size:11px;line-height:11px;color:#000;">Поступление МПЗ</div>
<div class="t" style="left:710px;top:363.69px;font-size:11px;line-height:11px;color:#000;">ТВ</div>
<div class="t" style="right:712px;top:393.69px;font-size:11px;line-height:11px;color:#000;text-align:right;">2</div>
<div class="t" style="left:84px;top:393.69px;font-size:11px;line-height:11px;color:#000;">41.2</div>
<div class="t" style="left:155px;top:393.69px;font-size:11px;line-height:11px;color:#000;">Джинсы</div>
<div class="t" style="left:155px;top:408.69px;font-size:11px;line-height:11px;color:#000;">Jeans</div>
<div class="t" style="left:155px;top:423.69px;font-size:11px;line-height:11px;color:#000;width:91px;overflow:hidden;height:15px;">Основной договор</div>
<div class="t" style="left:252px;top:393.69px;font-size:11px;line-height:11px;color:#000;">60.2</div>
<div class="t" style="left:314px;top:393.69px;font-size:11px;line-height:11px;color:#000;">Jeans</div>
<div class="t" style="left:314px;top:408.69px;font-size:11px;line-height:11px;color:#000;width:92px;overflow:hidden;height:15px;">Основной договор</div>
<div class="t" style="left:314px;top:423.69px;font-size:11px;line-height:11px;color:#000;width:92px;overflow:hidden;height:15px;">Расходы на приобретение</div>
<div class="t" style="left:516px;top:393.69px;font-size:11px;line-height:11px;color:#000;">1000.000</div>
<div class="t" style="right:29px;top:393.69px;font-size:11px;line-height:11px;color:#000;text-align:right;">472,000.00</div>
<div class="t" style="left:508px;top:408.69px;font-size:11px;line-height:11px;color:#000;">Поступление МПЗ</div>
<div class="t" style="left:710px;top:408.69px;font-size:11px;line-height:11px;color:#000;">ТВ</div>
<div class="t" style="right:712px;top:438.69px;font-size:11px;line-height:11px;color:#000;text-align:right;">3</div>
<div class="t" style="left:84px;top:438.69px;font-size:11px;line-height:11px;color:#000;">НДС</div>
<div class="t" style="left:155px;top:438.69px;font-size:11px;line-height:11px;color:#000;">Jeans</div>
<div class="t" style="left:155px;top:453.69px;font-size:11px;line-height:11px;color:#000;width:91px;overflow:hidden;height:15px;">Основной договор</div>
<div class="t" style="left:155px;top:468.69px;font-size:11px;line-height:11px;color:#000;width:91px;overflow:hidden;height:15px;">Расходы на приобретение</div>
<div class="t" style="right:29px;top:438.69px;font-size:11px;line-height:11px;color:#000;text-align:right;">72,000.00</div>
<div class="t" style="left:508px;top:453.69px;font-size:11px;line-height:11px;color:#000;">Входной НДС по поступившим МПЗ</div>
<div class="a" style="left:778px;top:315px;width:1px;height:171px;background:#FFFFFF;"></div>
<div class="a" style="left:779px;top:314px;width:1px;height:173px;background:#FFFFFF;"></div>
<div class="a" style="left:761px;top:315px;width:17px;height:170px;background:#F9F8F4;"></div>
<div class="a" style="left:761px;top:315px;width:17px;height:170px;background-image:radial-gradient(#E2E0D6 0.5px,transparent 0.6px);background-size:2px 2px"></div>
<div class="a" style="left:762px;top:317px;width:15px;height:16px;border:1px solid #C3D3FD;border-radius:2px;background:linear-gradient(135deg,#DCE6FE 0%,#C1D3FB 50%,#B4C8F6 100%)"></div>
<svg style="left:0;top:0" width="789" height="533" viewBox="0 0 789 533"><path d="M765 327L769 323L773 327" stroke="#4D6185" stroke-width="2.4" fill="none"/></svg>
<div class="a" style="left:762px;top:334px;width:15px;height:16px;border:1px solid #C3D3FD;border-radius:2px;background:linear-gradient(135deg,#DCE6FE 0%,#C1D3FB 50%,#B4C8F6 100%)"></div>
<div class="a" style="left:766px;top:338px;width:7px;height:1px;background:#8EA5DF;"></div>
<div class="a" style="left:766px;top:340px;width:7px;height:1px;background:#8EA5DF;"></div>
<div class="a" style="left:766px;top:342px;width:7px;height:1px;background:#8EA5DF;"></div>
<div class="a" style="left:766px;top:344px;width:7px;height:1px;background:#8EA5DF;"></div>
<div class="a" style="left:762px;top:469px;width:15px;height:16px;border:1px solid #C3D3FD;border-radius:2px;background:linear-gradient(135deg,#DCE6FE 0%,#C1D3FB 50%,#B4C8F6 100%)"></div>
<svg style="left:0;top:0" width="789" height="533" viewBox="0 0 789 533"><path d="M765 475L769 479L773 475" stroke="#4D6185" stroke-width="2.4" fill="none"/></svg>
<div class="t" style="left:9px;top:491.19px;font-size:11px;line-height:11px;color:#000080;letter-spacing:0.3px">Дт МХ.2 (Товары) // Джинсы // Основной</div>
<div class="t" style="left:9px;top:507.69px;font-size:11px;line-height:11px;color:#000080;letter-spacing:0.3px">Кт</div>
<div class="t" style="left:26px;top:507.69px;font-size:11px;line-height:11px;color:#000080;letter-spacing:-0.5px">()</div>
<div class="a" style="left:786px;top:277px;width:3px;height:256px;background:linear-gradient(90deg,#0A54EC,#0030C0 70%,#0024A8)"></div>
<div class="a" style="left:0px;top:277px;width:3px;height:256px;background:#0A56E8;"></div>
<div class="a" style="left:0;top:529px;width:789px;height:4px;background:linear-gradient(#0A56E8,#0036C0)"></div>
</body></html>
